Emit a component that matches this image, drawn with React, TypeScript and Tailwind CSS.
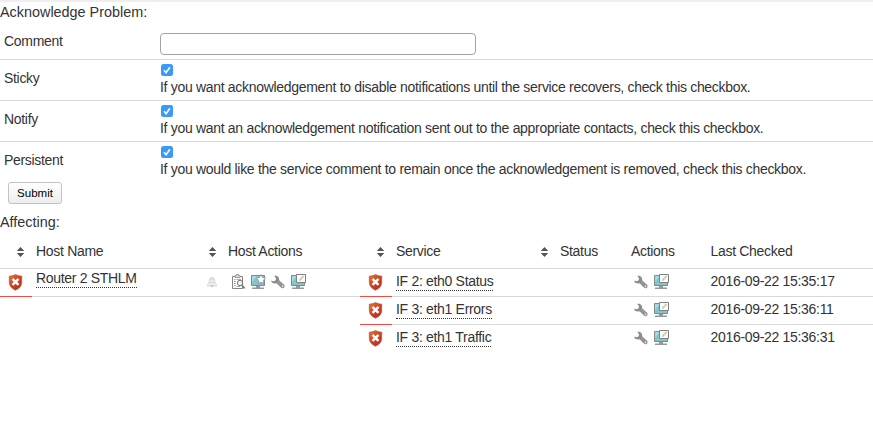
import React from 'react';

function SortIcon() {
  return (
    <svg width="9" height="10" viewBox="0 0 9 10" className="block shrink-0" fill="#555">
      <path d="M4.500 0 8.300 4H.7zM.7 6h7.600L4.500 10z" />
    </svg>
  );
}

function Shield() {
  return (
    <svg width="15" height="17" viewBox="-.5 0 15 17" className="block shrink-0">
      <defs>
        <linearGradient id="shield" x1="0" y1="0" x2=".7" y2="1">
          <stop offset="0" stopColor="#e08038" />
          <stop offset="0.450" stopColor="#d54a24" />
          <stop offset="1" stopColor="#c02a20" />
        </linearGradient>
      </defs>
      <path d="M.8 2.100C3.200 2.200 5 1.500 7 .6c2 .9 3.800 1.600 6.200 1.500V8.200c0 3.800-2.400 6.200-6.200 8C3.200 14.400.8 12 .8 8.200z" fill="url(#shield)" stroke="#a9573b" strokeWidth=".7" />
      <path d="m4 4.800 6 6m0-6-6 6" stroke="#fff" strokeWidth="2.500" />
    </svg>
  );
}

function Wrench() {
  return (
    <svg width="16" height="16" viewBox="0 0 16 16" className="block shrink-0">
      <path d="M4.200 1.900C7.200 1.200 9.700 3.500 9.100 6.300l4.700 4.200c2.200 2-.6 5.200-2.900 3.100L6.700 9.200C4 10 1.300 8.700.9 6.700l3.500.5 1.500-1.500-.1-1.900z" fill="#8c8c8c" />
      <path d="m8 7.500 4.500 4.200" stroke="#a8a8a8" strokeWidth="1" />
      <circle cx="12.600" cy="12.300" r=".9" fill="#eee" />
    </svg>
  );
}

function Monitor({ kind }: { kind: 'star' | 'edit' }) {
  return (
    <svg width="16" height="16" viewBox="0 0 16 16" className="block shrink-0">
      <path d="M1.500 1.500h13v10h-13z" fill="#83c5cc" stroke="#7b8b8d" />
      <path d="M2 2h5L2 8z" fill="#a5dade" />
      <path d="M6 12h4v2H6z" fill="#999" />
      <path d="M2 13.500h12V15H2z" fill="#999" />
      {kind === 'star' ? (
        <path d="m11 .5 1.500 3 3.100.5-2.300 2.400.5 3.200-2.800-1.500-2.900 1.500.5-3.200L6.300 4l3.200-.5z" fill="#fff" stroke="#858585" strokeWidth=".7" />
      ) : (
        <>
          <path d="M6.500.5h9v8h-9z" fill="#fcfcf8" stroke="#808080" />
          <path d="m9.500 6.500.7-2 2.800-2.700.8.8L11.200 5.600z" fill="#e8e9cf" stroke="#a5a594" strokeWidth=".6" />
        </>
      )}
    </svg>
  );
}

function Clipboard() {
  return (
    <svg width="16" height="16" viewBox="0 0 16 16" className="block shrink-0" fill="none">
      <path d="M2.500 2.500h10v12h-10z" fill="#fff" stroke="#858585" />
      <path d="M5 3.500v-2h1.400V.5h2.200v1H10v2z" fill="#ddd" stroke="#888" strokeWidth=".8" />
      <path d="M4 5.500h1.500M4 11.500h1.500" stroke="#df9950" />
      <path d="M4 7.500h1.500M4 9.500h1.500" stroke="#4c91c9" />
      <path d="M6.500 5.500H11M6.500 12.500H10" stroke="#aaa" />
      <circle cx="10" cy="9" r="2.700" fill="#f3f3f3" stroke="#777" />
      <path d="m11.900 11.200 2.800 3.300" stroke="#777" strokeWidth="1.700" />
    </svg>
  );
}

function Bell() {
  return (
    <svg width="12" height="14" viewBox="0 0 12 14" className="block shrink-0">
      <path d="M2 8c.8-1 .6-6 4-6s3.200 5 4 6l1 1.500H1z" fill="#dcdcdc" />
      <path d="M1 9.500h10v2H1z" fill="#dedede" />
      <path d="M3.500 6h5M1.500 9h9" stroke="#f8f8f8" />
      <circle cx="6" cy="11" r="1.300" fill="#ccc" />
    </svg>
  );
}

function CheckBox() {
  return (
    <span className="flex h-3 w-3 items-center justify-center rounded-[2.5px] bg-[#3b99fc]">
      <svg width="12" height="12" viewBox="0 0 12 12" fill="none">
        <path d="m3 6.300 2.100 2.400L8.900 3.200" stroke="#fff" strokeWidth="1.600" />
      </svg>
    </span>
  );
}

const options = [
  { label: 'Sticky', text: 'If you want acknowledgement to disable notifications until the service recovers, check this checkbox.' },
  { label: 'Notify', text: 'If you want an acknowledgement notification sent out to the appropriate contacts, check this checkbox.' },
  { label: 'Persistent', text: 'If you would like the service comment to remain once the acknowledgement is removed, check this checkbox.' },
];

const services = [
  { name: 'IF 2: eth0 Status', time: '2016-09-22 15:35:17' },
  { name: 'IF 3: eth1 Errors', time: '2016-09-22 15:36:11' },
  { name: 'IF 3: eth1 Traffic', time: '2016-09-22 15:36:31' },
];

export default function App() {
  return (
    <main className="h-[432px] w-[873px] overflow-hidden border-t-2 border-[#eeeeee] bg-white font-['Liberation_Sans',Arial,sans-serif] text-[14px] leading-[14px] tracking-[-0.31px] whitespace-nowrap text-[#333]">
      <h1 className="h-[22px] pt-[2px] text-[14.4px] leading-4 tracking-normal">Acknowledge Problem:</h1>
      <form>
        <div className="grid h-9 grid-cols-[160px_1fr] border-b border-[#d9d9d9]">
          <label className="pt-[10px] pl-1">Comment</label>
          <div className="pt-[9px]">
            <input aria-label="Comment" className="block h-[22px] w-[316px] rounded-[4px] border border-[#a3a3a3] bg-white px-1 outline-none" />
          </div>
        </div>
        {options.map((o, i) => (
          <div key={o.label} className={`grid h-[41px] grid-cols-[160px_1fr] border-[#d9d9d9] ${i < 2 ? 'border-b' : ''}`}>
            <label className="pt-[11px] pl-1">{o.label}</label>
            <div className="pt-1">
              <div className="pl-px"><CheckBox /></div>
              <p className="mt-[4px]">{o.text}</p>
            </div>
          </div>
        ))}
        <button type="button" className="mt-[-1px] ml-2 block h-[22px] w-[54px] rounded-[3px] border border-[#c2c2c2] bg-gradient-to-b from-white to-[#eeeeee] text-[11.5px] leading-5 tracking-normal text-black">Submit</button>
      </form>
      <h2 className="mt-[10px] h-[22px] text-[14.4px] leading-4 tracking-normal">Affecting:</h2>
      <section className="grid grid-cols-[360px_1fr]">
        <div>
          <div className="grid h-[33px] grid-cols-[36px_172px_20px_1fr] border-b border-[#d9d9d9] pt-2">
            <span className="pt-[3px] pl-4"><SortIcon /></span>
            <span>Host Name</span>
            <span className="pt-[3px]"><SortIcon /></span>
            <span>Host Actions</span>
          </div>
          <div className="flex h-7">
            <div className="w-8 border-b border-[#f04b4b] pt-[5px] pl-2"><Shield /></div>
            <div className="grid flex-1 grid-cols-[170px_24px_1fr] border-b border-[#d9d9d9] pl-1">
              <span><a className="mt-[2px] inline-block h-[17px] border-b border-dotted border-[#333]">Router 2 STHLM</a></span>
              <span className="pt-[6px]"><Bell /></span>
              <span className="flex gap-1 pt-[5px]"><Clipboard /><Monitor kind="star" /><Wrench /><Monitor kind="edit" /></span>
            </div>
          </div>
        </div>
        <div>
          <div className="grid h-[33px] grid-cols-[36px_144px_20px_71px_79.5px_1fr] border-b border-[#d9d9d9] pt-2">
            <span className="pt-[3px] pl-4"><SortIcon /></span>
            <span>Service</span>
            <span className="pt-[3px]"><SortIcon /></span>
            <span>Status</span>
            <span>Actions</span>
            <span>Last Checked</span>
          </div>
          {services.map((s, i) => (
            <div key={s.name} className="flex h-7">
              <div className={`w-8 border-[#f04b4b] pt-[5px] pl-2 ${i < 2 ? 'border-b' : ''}`}><Shield /></div>
              <div className={`grid flex-1 grid-cols-[237px_77.5px_1fr] border-[#d9d9d9] pl-1 ${i < 2 ? 'border-b' : ''}`}>
                <span><a className="mt-[5px] inline-block h-[17px] border-b border-dotted border-[#333]">{s.name}</a></span>
                <span className="flex gap-1 pt-[5px]"><Wrench /><Monitor kind="edit" /></span>
                <span className="pt-[5px]">{s.time}</span>
              </div>
            </div>
          ))}
        </div>
      </section>
    </main>
  );
}
